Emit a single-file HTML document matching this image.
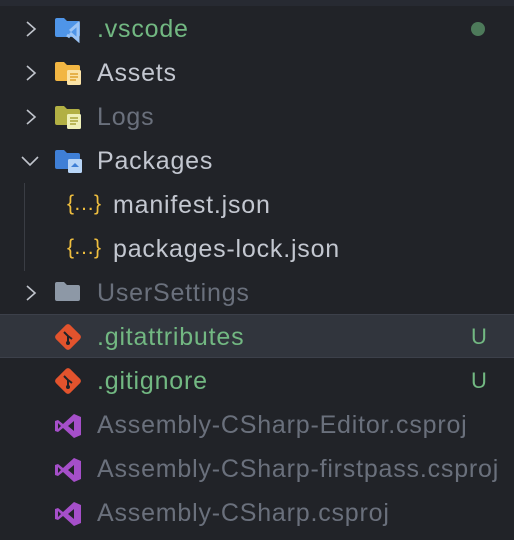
<!DOCTYPE html>
<html><head><style>
body{margin:0;width:514px;height:540px;background:#212328;overflow:hidden;font-family:"Liberation Sans",sans-serif;position:relative}
.top{position:absolute;left:0;top:0;width:514px;height:6px;background:#272a32}
.row{position:absolute;left:0;width:514px;height:44px;font-size:25px;letter-spacing:0.8px;line-height:44px;color:#c3c7d0;white-space:nowrap}
.row .t{position:absolute;left:97px;top:0}
.row svg{position:absolute}
.sel{background:#31353d;border-top:1px solid #3c404a;border-bottom:1px solid #3c404a;height:42px}
.g{color:#72b882}.d{color:#6a707c}
.u{position:absolute;left:471px;color:#72b882;font-size:22px;letter-spacing:0}
.guide{position:absolute;left:24px;top:183px;width:1px;height:88px;background:#3a3d44}
.br{position:absolute;left:67px;top:-1px;color:#f0bf3f;font-size:21px;letter-spacing:-0.5px}
</style></head><body>
<div class="top"></div>
<div class="guide"></div>

<div class="row" style="top:7px">
<svg style="left:24px;top:14px" width="14" height="16"><path d="M3 1l8 7-8 7" fill="none" stroke="#c0c4cc" stroke-width="1.6"/></svg>
<svg style="left:55px;top:10px" width="29" height="26"><path d="M0 3q0-2 2-2h7l3 3h11q2 0 2 2v12q0 2-2 2H2q-2 0-2-2z" fill="#4f95e8"/><path d="M15 14l8-7v16l-8-7M15 20l-3-2" fill="none" stroke="#9cc4f5" stroke-width="3"/></svg>
<span class="t g">.vscode</span>
<svg style="left:470px;top:14px" width="16" height="16"><circle cx="8" cy="8" r="7" fill="#4d7a5a"/></svg>
</div>

<div class="row" style="top:51px">
<svg style="left:24px;top:14px" width="14" height="16"><path d="M3 1l8 7-8 7" fill="none" stroke="#c0c4cc" stroke-width="1.6"/></svg>
<svg style="left:55px;top:10px" width="29" height="26"><path d="M0 3q0-2 2-2h7l3 3h11q2 0 2 2v12q0 2-2 2H2q-2 0-2-2z" fill="#f2b643"/><rect x="12" y="9" width="14" height="15" rx="1.5" fill="#fbe3a7"/><path d="M15 13h8M15 16h8M15 19h6" stroke="#e0a22f" stroke-width="1.5"/></svg>
<span class="t">Assets</span>
</div>

<div class="row" style="top:95px">
<svg style="left:24px;top:14px" width="14" height="16"><path d="M3 1l8 7-8 7" fill="none" stroke="#c0c4cc" stroke-width="1.6"/></svg>
<svg style="left:55px;top:10px" width="29" height="26"><path d="M0 3q0-2 2-2h7l3 3h11q2 0 2 2v12q0 2-2 2H2q-2 0-2-2z" fill="#b2b044"/><rect x="12" y="9" width="14" height="15" rx="1.5" fill="#eef0b8"/><path d="M15 13h8M15 16h8M15 19h6" stroke="#a9a53a" stroke-width="1.5"/></svg>
<span class="t d">Logs</span>
</div>

<div class="row" style="top:139px">
<svg style="left:21px;top:16px" width="18" height="12"><path d="M1 2l8 8 8-8" fill="none" stroke="#c0c4cc" stroke-width="1.6"/></svg>
<svg style="left:55px;top:10px" width="29" height="26"><path d="M0 3q0-2 2-2h7l3 3h11q2 0 2 2v12q0 2-2 2H2q-2 0-2-2z" fill="#3f7fd6"/><rect x="13" y="10" width="14" height="14" rx="1.5" fill="#b8d5f7"/><path d="M16 18l4-4 4 4z" fill="#3f7fd6"/></svg>
<span class="t">Packages</span>
</div>

<div class="row" style="top:183px">
<span class="br">{…}</span>
<span class="t" style="left:113px">manifest.json</span>
</div>
<div class="row" style="top:227px">
<span class="br">{…}</span>
<span class="t" style="left:113px">packages-lock.json</span>
</div>

<div class="row" style="top:271px">
<svg style="left:24px;top:14px" width="14" height="16"><path d="M3 1l8 7-8 7" fill="none" stroke="#c0c4cc" stroke-width="1.6"/></svg>
<svg style="left:55px;top:10px" width="29" height="26"><path d="M0 3q0-2 2-2h7l3 3h11q2 0 2 2v12q0 2-2 2H2q-2 0-2-2z" fill="#8d98a6"/></svg>
<span class="t d">UserSettings</span>
</div>

<div class="row sel" style="top:314px">
<svg style="left:54px;top:8px" width="28" height="28"><rect x="4" y="4" width="20" height="20" rx="3" transform="rotate(45 14 14)" fill="#e2532d"/><path d="M10 9l4 4v7M14 13l4 3" stroke="#212328" stroke-width="2" fill="none"/><circle cx="14" cy="20" r="2" fill="#212328"/></svg>
<span class="t g">.gitattributes</span><span class="u">U</span>
</div>

<div class="row" style="top:359px">
<svg style="left:54px;top:8px" width="28" height="28"><rect x="4" y="4" width="20" height="20" rx="3" transform="rotate(45 14 14)" fill="#e2532d"/><path d="M10 9l4 4v7M14 13l4 3" stroke="#212328" stroke-width="2" fill="none"/><circle cx="14" cy="20" r="2" fill="#212328"/></svg>
<span class="t g">.gitignore</span><span class="u">U</span>
</div>

<div class="row" style="top:403px">
<svg style="left:55px;top:10px" width="27" height="26"><path d="M19 1l7 3v18l-7 3-11-10-5 4-3-1V8l3-1 5 4zM19 8l-6 5 6 5zM3 10v6l3-3z" fill="#a54fc9" fill-rule="evenodd"/></svg>
<span class="t d">Assembly-CSharp-Editor.csproj</span>
</div>
<div class="row" style="top:447px">
<svg style="left:55px;top:10px" width="27" height="26"><path d="M19 1l7 3v18l-7 3-11-10-5 4-3-1V8l3-1 5 4zM19 8l-6 5 6 5zM3 10v6l3-3z" fill="#a54fc9" fill-rule="evenodd"/></svg>
<span class="t d">Assembly-CSharp-firstpass.csproj</span>
</div>
<div class="row" style="top:491px">
<svg style="left:55px;top:10px" width="27" height="26"><path d="M19 1l7 3v18l-7 3-11-10-5 4-3-1V8l3-1 5 4zM19 8l-6 5 6 5zM3 10v6l3-3z" fill="#a54fc9" fill-rule="evenodd"/></svg>
<span class="t d">Assembly-CSharp.csproj</span>
</div>
</body></html>
